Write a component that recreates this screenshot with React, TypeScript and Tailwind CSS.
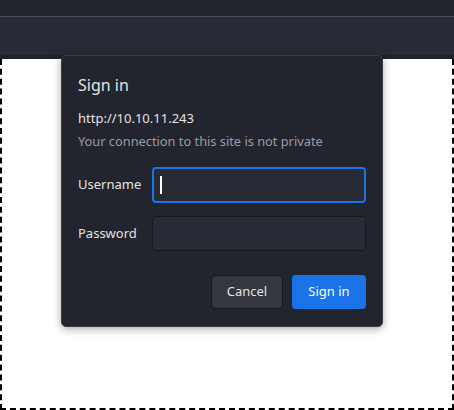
import React from "react";

export default function App() {
  return (
    <div
      className="relative flex h-[410px] w-[454px] flex-col overflow-hidden bg-white"
      style={{ fontFamily: '"Noto Sans", "Open Sans", sans-serif' }}
    >
      {/* browser chrome */}
      <div className="h-4 bg-[#21242c]" />
      <div className="h-px bg-[#4b4c53]" />
      <div className="h-[38px] bg-[#282a35]" />
      <div className="h-1 bg-[#21232b]" />
      <div className="flex-1 border-2 border-t-0 border-dashed border-black bg-white" />

      {/* auth dialog */}
      <div className="absolute left-[61px] top-[55px] flex h-[272px] w-[322px] flex-col rounded-[5px] border border-[#3c3e46] bg-[#22252e] px-4 pt-[17px] shadow-[0_2px_8px_rgba(0,0,0,0.35)]">
        <div className="text-base leading-6 text-[#e3e3e3]">Sign in</div>
        <div className="mt-[11px] text-[13px] leading-5 text-[#e3e3e3]">http://10.10.11.243</div>
        <div className="mt-[3px] text-[12.8px] leading-5 text-[#9a9ca3]">
          Your connection to this site is not private
        </div>

        <div className="mt-4 flex items-center">
          <label className="w-[74px] text-[13px] text-[#e3e3e3]">Username</label>
          <div className="relative flex h-9 w-[214px] items-center rounded-[4px] border-2 border-[#1a73e8] bg-[#282a35] pl-[6px]">
            <span className="h-[18px] w-[1.5px] bg-white" />
          </div>
        </div>

        <div className="mt-[13px] flex items-center">
          <label className="w-[74px] text-[13px] text-[#e3e3e3]">Password</label>
          <div className="h-[35px] w-[214px] rounded-[4px] border border-[#17181d] bg-[#282a35]" />
        </div>

        <div className="mt-6 flex justify-end gap-[9px]">
          <button className="h-[34px] w-[72px] rounded-[4px] border border-[#17181d] bg-[#343640] text-[13px] text-[#e3e3e3]">
            Cancel
          </button>
          <button className="h-[34px] w-[74px] rounded-[4px] bg-[#1a73e8] text-[13px] text-white">
            Sign in
          </button>
        </div>
      </div>
    </div>
  );
}
